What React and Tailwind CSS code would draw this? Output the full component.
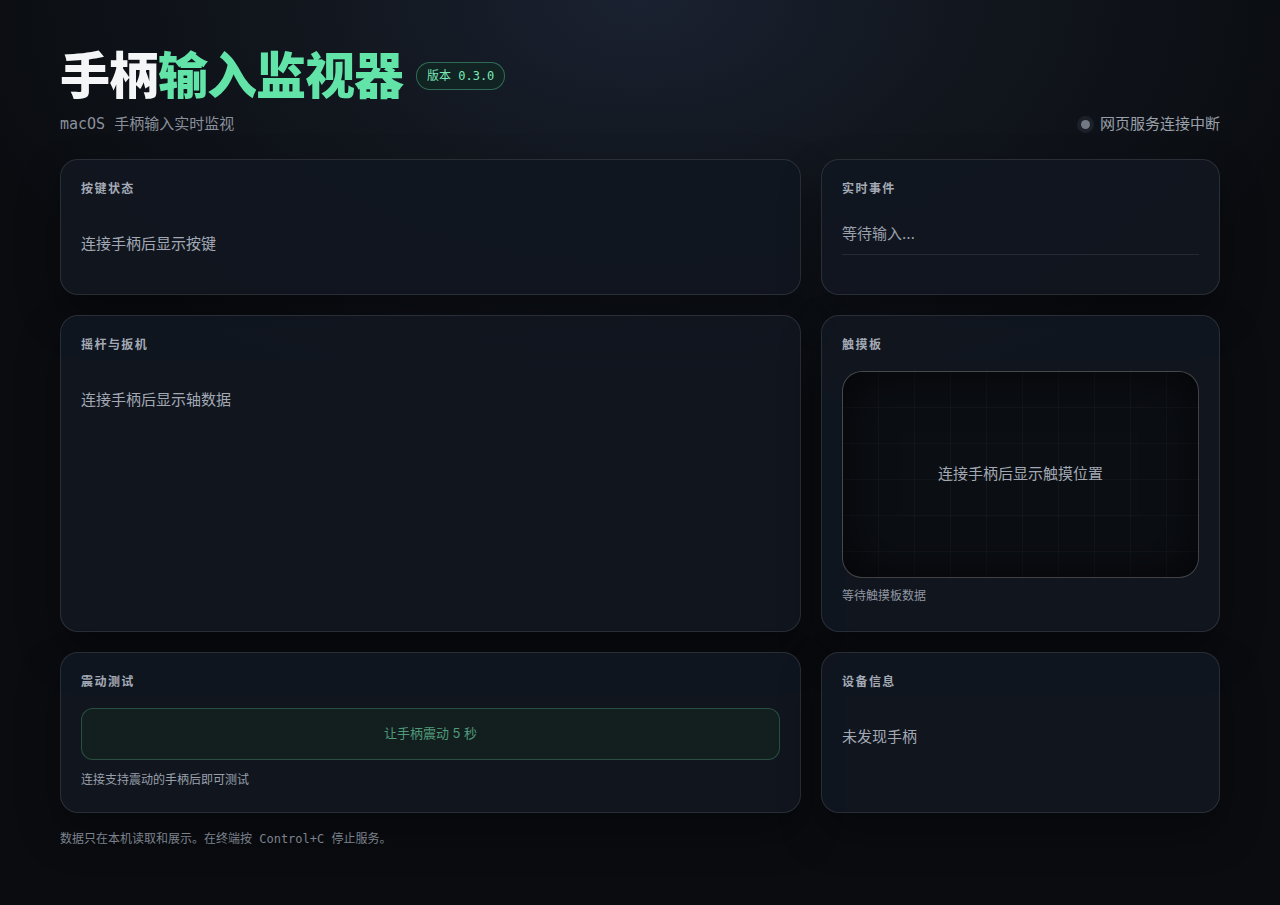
export default function App() {
  const sans = { fontFamily: 'Inter, "Noto Sans CJK SC", sans-serif' };
  const card =
    "rounded-[18px] border border-white/[0.11] bg-[#111620]/90 shadow-[0_20px_40px_rgba(0,0,0,0.35)] p-5";
  const title = "text-[12px] font-bold tracking-[0.12em] text-[#a3aab6] leading-[16px]";
  return (
    <div
      className="min-h-[905px] w-full bg-[#0a0c10] text-[#a7adb8]"
      style={sans}
    >
      <div className="min-h-[905px] w-full bg-[radial-gradient(ellipse_700px_420px_at_50%_0%,#1a2130_0%,#12171f_45%,#0a0c10_100%)]">
        <div className="mx-auto w-[1160px] pt-[44px]">
          <div className="flex items-center gap-[13px]">
            <h1 className="text-[50px] font-black leading-[64px] tracking-[-0.02em]">
              <span className="text-[#f4f5f7]">手柄</span>
              <span className="text-[#62e3a8]">输入监视器</span>
            </h1>
            <span
              className="rounded-full border border-[#3d8a6a]/70 bg-[#0f2a22]/60 px-[10px] py-[5px] text-[12px] leading-[16px] text-[#7ae8b8]"
              style={{ fontFamily: '"DejaVu Sans Mono", "Noto Sans CJK SC", monospace' }}
            >
              版本 0.3.0
            </span>
          </div>
          <div className="mt-[6px] flex items-center justify-between">
            <div
              className="text-[15px] leading-[20px] text-[#8a909b]"
              style={{ fontFamily: '"DejaVu Sans Mono", "Noto Sans CJK SC", monospace' }}
            >
              macOS 手柄输入实时监视
            </div>
            <div className="flex items-center gap-[6px] text-[15px] leading-[20px] text-[#9aa0ab]">
              <span className="h-[17px] w-[17px] rounded-full bg-[#1c2029] flex items-center justify-center">
                <span className="h-[9px] w-[9px] rounded-full bg-[#737885]" />
              </span>
              网页服务连接中断
            </div>
          </div>

          <div className="mt-[25px] grid grid-cols-[741px_399px] gap-[20px]">
            <div className={`${card} h-[136px]`}>
              <div className={`${title} mt-[1px]`}>按键状态</div>
              <div className="mt-[37px] text-[15px] leading-[20px] text-[#a3a9b4]">连接手柄后显示按键</div>
            </div>
            <div className={`${card} h-[136px]`}>
              <div className={`${title} mt-[1px]`}>实时事件</div>
              <div className="mt-[27px] border-b border-white/[0.09] pb-[10px] text-[15px] leading-[20px] text-[#9aa0ab]">
                等待输入…
              </div>
            </div>

            <div className={`${card} h-[317px]`}>
              <div className={`${title} mt-[1px]`}>摇杆与扳机</div>
              <div className="mt-[37px] text-[15px] leading-[20px] text-[#a3a9b4]">连接手柄后显示轴数据</div>
            </div>
            <div className={`${card} h-[317px]`}>
              <div className={`${title} mt-[1px]`}>触摸板</div>
              <div
                className="mt-[18px] flex h-[207px] items-center justify-center rounded-[20px] border border-white/[0.22] bg-[#0b0e13] bg-[linear-gradient(rgba(255,255,255,0.028)_1px,transparent_1px),linear-gradient(90deg,rgba(255,255,255,0.028)_1px,transparent_1px)] bg-[size:36px_36px] bg-[position:-1px_-1px] shadow-[inset_0_0_50px_rgba(0,0,0,0.7)] text-[15px] text-[#a3a9b4]"
              >
                连接手柄后显示触摸位置
              </div>
              <div className="mt-[10px] text-[12px] leading-[16px] text-[#9096a1]">等待触摸板数据</div>
            </div>

            <div className={`${card} h-[161px]`}>
              <div className={`${title} mt-[1px]`}>震动测试</div>
              <div className="mt-[18px] flex h-[52px] items-center justify-center rounded-[12px] border border-[#2f5c4c]/80 bg-[#14221f]/80 text-[13px] text-[#4f9a7a]">
                让手柄震动 5 秒
              </div>
              <div className="mt-[12px] text-[12px] leading-[16px] text-[#9aa0ab]">连接支持震动的手柄后即可测试</div>
            </div>
            <div className={`${card} h-[161px]`}>
              <div className={`${title} mt-[1px]`}>设备信息</div>
              <div className="mt-[37px] text-[15px] leading-[20px] text-[#a3a9b4]">未发现手柄</div>
            </div>
          </div>

          <div
            className="mt-[18px] text-[12px] leading-[16px] text-[#7c828d]"
            style={{ fontFamily: '"DejaVu Sans Mono", "Noto Sans CJK SC", monospace' }}
          >
            数据只在本机读取和展示。在终端按 Control+C 停止服务。
          </div>
        </div>
      </div>
    </div>
  );
}
